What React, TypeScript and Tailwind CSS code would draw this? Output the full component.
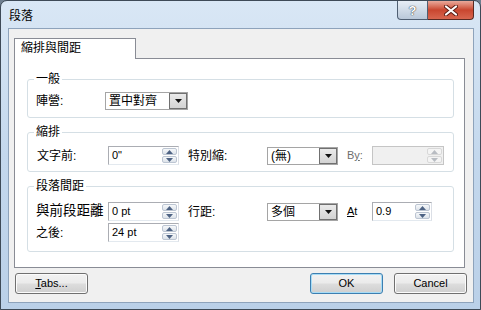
import React from "react";

// Win7 style "段落" paragraph dialog

const btnBg =
	"bg-[linear-gradient(#f2f2f2_0%,#ebebeb_48%,#dddddd_52%,#cfcfcf_100%)]";

const Arrow: React.FC<{ up?: boolean; color?: string }> = ({ up, color = "#4e6384" }) => (
	<svg width="7" height="4" viewBox="0 0 7 4">
		{up ? <path d="M0 4 L3.5 0 L7 4 Z" fill={color} /> : <path d="M0 0 L7 0 L3.5 4 Z" fill={color} />}
	</svg>
);

const SpinBox: React.FC<{ value?: string; className: string; disabled?: boolean }> = ({
	value,
	className,
	disabled,
}) => (
	<div
		className={`flex h-[19px] border ${
			disabled ? "border-[#c5c5c5] bg-[#f0f0f0]" : "border-[#abadb3] border-b-[#e3e9ef] border-r-[#dbdfe6] bg-white"
		} ${className}`}
	>
		<div className="flex-1 pl-[3px] text-[11px] leading-[17px] text-black">{value}</div>
		<div className="flex w-[16px] flex-col gap-px py-px pr-px">
			<div
				className={`flex flex-1 items-center justify-center rounded-[2px] border ${
					disabled ? "border-[#d8d8d8] bg-[#f4f4f4]" : "border-[#bcc5d2] bg-gradient-to-b from-[#f6f8fa] to-[#dde3ea]"
				}`}
			>
				<Arrow up color={disabled ? "#b8bcc2" : "#4e6384"} />
			</div>
			<div
				className={`flex flex-1 items-center justify-center rounded-[2px] border ${
					disabled ? "border-[#d8d8d8] bg-[#f4f4f4]" : "border-[#bcc5d2] bg-gradient-to-b from-[#f6f8fa] to-[#dde3ea]"
				}`}
			>
				<Arrow color={disabled ? "#b8bcc2" : "#4e6384"} />
			</div>
		</div>
	</div>
);

const Combo: React.FC<{ value: string; className: string }> = ({ value, className }) => (
	<div className={`flex h-[18px] border border-[#a5a5a5] bg-white ${className}`}>
		<div className="flex-1 pl-[3px] text-[12px] leading-[16px] text-black">{value}</div>
		<div className="flex w-[18px] items-center justify-center border border-[#707070] bg-gradient-to-b from-[#eaeaea] to-[#d3d3d3]">
			<svg width="7" height="4" viewBox="0 0 7 4">
				<path d="M0 0 L7 0 L3.5 4 Z" fill="#111" />
			</svg>
		</div>
	</div>
);

const Group: React.FC<{ title: string; className: string; children: React.ReactNode }> = ({
	title,
	className,
	children,
}) => (
	<div className={`relative rounded-[3px] border border-[#d5dfe5] ${className}`}>
		<span className="absolute -top-[8px] left-[6px] bg-white px-[2px] text-[12px] leading-[14px] text-black">
			{title}
		</span>
		{children}
	</div>
);

const Button: React.FC<{ children: React.ReactNode; primary?: boolean }> = ({ children, primary }) => (
	<button
		className={`h-[21px] w-[73px] rounded-[3px] border text-[11px] leading-[19px] text-black ${btnBg} ${
			primary ? "border-[#3c7fb1] shadow-[inset_0_0_0_1px_#a7dcf6]" : "border-[#707070] shadow-[inset_0_0_0_1px_#fbfbfb]"
		}`}
	>
		{children}
	</button>
);

const App: React.FC = () => {
	return (
		<div className="h-[310px] w-[481px] overflow-hidden bg-[#6f7f90] font-['Liberation_Sans','Noto_Sans_CJK_TC',sans-serif]">
			<div className="flex h-[310px] flex-col rounded-t-[7px] border border-[#3e4a57] bg-gradient-to-b from-[#d9e7f5] via-[#c4d8ed] to-[#bad0e8]">
				{/* Title bar */}
				<div className="flex h-[27px] items-start justify-between">
					<div className="pl-[8px] pt-[8px] text-[12px] leading-[14px] text-black">段落</div>
					<div className="mr-[6px] flex">
						<div className="flex h-[19px] w-[31px] items-center justify-center rounded-bl-[4px] border border-t-0 border-[#4f5f72] bg-gradient-to-b from-[#e6edf5] via-[#d0dbe7] to-[#b9c8d9]">
							<span className="text-[13px] font-bold leading-[13px] text-white [text-shadow:0_0_1px_#333,0_0_1px_#333]">
								?
							</span>
						</div>
						<div className="flex h-[19px] w-[46px] items-center justify-center rounded-br-[4px] border border-l-0 border-t-0 border-[#5a2a22] bg-gradient-to-b from-[#e9a99b] via-[#c9462f] to-[#d8664f]">
							<svg width="14" height="11" viewBox="0 0 14 11">
								<path d="M2 1.5 L12 9.5 M12 1.5 L2 9.5" stroke="#5b1b12" strokeWidth="4" strokeLinecap="round" />
								<path d="M2 1.5 L12 9.5 M12 1.5 L2 9.5" stroke="#ffffff" strokeWidth="2.2" strokeLinecap="round" />
							</svg>
						</div>
					</div>
				</div>

				{/* Client area */}
				<div className="ml-[7px] mr-[6px] flex h-[275px] flex-col border border-[#8ea3bb] bg-[#f0f0f0] pt-[9px]">
					<div className="pl-[5px]">
						<div className="relative z-10 -mb-px h-[21px] w-[122px] border border-b-0 border-[#898c95] bg-white pl-[6px] text-[12px] leading-[19px] text-black">
							縮排與間距
						</div>
					</div>
					<div className="ml-[5px] flex h-[210px] w-[451px] flex-col gap-[14px] border border-[#898c95] bg-white pl-[12px] pt-[20px]">
						<Group title="一般" className="h-[39px] w-[427px] pl-[8px] pt-[12px]">
							<div className="flex h-[18px] items-center">
								<span className="w-[69px] text-[12px] text-black">陣營:</span>
								<Combo value="置中對齊" className="w-[83px]" />
							</div>
						</Group>
						<Group title="縮排" className="h-[40px] w-[427px] pl-[9px] pt-[13px]">
							<div className="flex h-[19px] items-center">
								<span className="w-[71px] text-[12px] text-black">文字前:</span>
								<SpinBox value={'0"'} className="w-[71px]" />
								<span className="ml-[9px] w-[79px] text-[12px] text-black">特別縮:</span>
								<Combo value="(無)" className="w-[71px]" />
								<span className="ml-[9px] w-[25px] text-[11px] text-[#6d6d6d]">
									B<span className="underline">y</span>:
								</span>
								<SpinBox className="w-[72px]" disabled />
							</div>
						</Group>
						<Group title="段落間距" className="h-[66px] w-[427px] pl-[8px] pt-[15px]">
							<div className="flex h-[19px] items-center">
								<span className="w-[72px] text-[13.5px] text-black">與前段距離</span>
								<SpinBox value="0 pt" className="w-[71px]" />
								<span className="ml-[9px] w-[79px] text-[12px] text-black">行距:</span>
								<Combo value="多個" className="w-[71px]" />
								<span className="ml-[9px] w-[25px] text-[11px] text-black">
									<span className="underline">A</span>t
								</span>
								<SpinBox value="0.9" className="w-[60px]" />
							</div>
							<div className="mt-[2px] flex h-[19px] items-center">
								<span className="w-[72px] text-[12px] text-black">之後:</span>
								<SpinBox value="24 pt" className="w-[71px]" />
							</div>
						</Group>
					</div>

					{/* Bottom buttons */}
					<div className="mt-[5px] flex items-center justify-between pl-[6px] pr-[6px]">
						<Button>
							<span className="underline">T</span>abs...
						</Button>
						<div className="flex gap-[11px]">
							<Button primary>OK</Button>
							<Button>Cancel</Button>
						</div>
					</div>
				</div>
			</div>
		</div>
	);
};

export default App;
